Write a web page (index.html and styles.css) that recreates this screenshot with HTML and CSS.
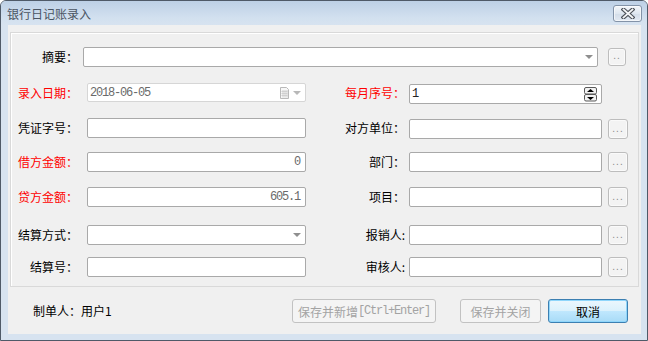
FILE: index.html
```html
<!DOCTYPE html>
<html lang="zh-CN">
<head>
<meta charset="utf-8">
<title>银行日记账录入</title>
<link rel="stylesheet" href="styles.css">
</head>
<body>
<div class="window">
  <div class="titlebar">
    <span class="title">银行日记账录入</span>
    <div class="close">
      <svg width="14" height="11" viewBox="0 0 14 11">
        <path d="M2.5 1.5 L11.5 9.5 M11.5 1.5 L2.5 9.5" stroke="#4b5058" stroke-width="4" stroke-linecap="square" fill="none"/>
        <path d="M2.5 1.5 L11.5 9.5 M11.5 1.5 L2.5 9.5" stroke="#f4f6f8" stroke-width="1.8" stroke-linecap="square" fill="none"/>
      </svg>
    </div>
  </div>
  <div class="client">
    <div class="panel">
      <div class="form">
        <label class="lbl">摘要：</label>
        <div class="field wide"><span class="arrow"></span></div>
        <div class="more first">..</div>

        <label class="lbl req">录入日期：</label>
        <div class="field fl date">
          <span class="val">2018-06-05</span>
          <svg class="cal" width="9" height="12" viewBox="0 0 9 12">
            <path d="M0.5 0.5 H6.5 L8.5 2.5 V11.5 H0.5 Z" fill="#f7f7f7" stroke="#b9b9b9"/>
            <path d="M1.5 4.5 H7.5 M1.5 6.5 H7.5 M1.5 8.5 H7.5 M3 3 V10.5 M5 3 V10.5 M7 3 V10.5" stroke="#d0d0d0" fill="none"/>
          </svg>
          <span class="arrow light"></span>
        </div>
        <label class="lbl lr req">每月序号：</label>
        <div class="field fr off">
          <span class="val">1</span>
          <svg class="spin" width="13" height="15" viewBox="0 0 13 15">
            <rect x="0.5" y="0.5" width="12" height="6.5" rx="1.5" fill="#f2f2f2" stroke="#5a5a5a"/>
            <rect x="0.5" y="7.5" width="12" height="6.5" rx="1.5" fill="#f2f2f2" stroke="#5a5a5a"/>
            <path d="M3 5 L6.5 2 L10 5 Z" fill="#000"/>
            <path d="M3 10 L6.5 13 L10 10 Z" fill="#000"/>
          </svg>
        </div>

        <label class="lbl">凭证字号：</label>
        <div class="field fl"></div>
        <label class="lbl lr">对方单位：</label>
        <div class="field fr off"></div>
        <div class="more off">...</div>

        <label class="lbl req">借方金额：</label>
        <div class="field fl num"><span class="val">0</span></div>
        <label class="lbl lr">部门：</label>
        <div class="field fr"></div>
        <div class="more">...</div>

        <label class="lbl req">贷方金额：</label>
        <div class="field fl num"><span class="val">605.1</span></div>
        <label class="lbl lr">项目：</label>
        <div class="field fr"></div>
        <div class="more">...</div>

        <label class="lbl">结算方式：</label>
        <div class="field fl"><span class="arrow"></span></div>
        <label class="lbl lr">报销人:</label>
        <div class="field fr"></div>
        <div class="more">...</div>

        <label class="lbl">结算号：</label>
        <div class="field fl"></div>
        <label class="lbl lr">审核人:</label>
        <div class="field fr"></div>
        <div class="more">...</div>
      </div>
    </div>
    <div class="footer">
      <span class="maker">制单人：用户1</span>
      <button class="btn dis b1">保存并新增<span class="mono">[Ctrl+Enter]</span></button>
      <button class="btn dis b2">保存并关闭</button>
      <button class="btn primary b3">取消</button>
    </div>
  </div>
</div>
</body>
</html>
```
FILE: styles.css
```css
* { box-sizing: border-box; }
html, body { margin: 0; padding: 0; }
body {
  width: 648px;
  height: 341px;
  background: #ffffff;
  font-family: "Noto Sans CJK SC", "Noto Sans", sans-serif;
  font-size: 12px;
  overflow: hidden;
}
.window {
  width: 648px;
  height: 341px;
  border: 1px solid #4f5a68;
  border-radius: 6px 6px 0 0;
  background: #d7e3f0;
  display: flex;
  flex-direction: column;
}
.titlebar {
  height: 24px;
  display: flex;
  align-items: center;
  padding: 0 5px 0 6px;
  background: linear-gradient(#bdd0e6, #d2e0ef 70%, #d7e3f0);
  border-radius: 5px 5px 0 0;
}
.title {
  color: #4a5462;
  font-size: 12px;
  line-height: 16px;
  margin-top: 1px;
}
.close {
  margin-left: auto;
  width: 29px;
  height: 17px;
  border: 1px solid #8393a8;
  border-radius: 3px;
  background: linear-gradient(#f3f6fa, #dfe7f0 50%, #d3dde9 51%, #e2e9f2);
  display: flex;
  align-items: center;
  justify-content: center;
  box-shadow: inset 0 0 0 1px rgba(255,255,255,0.6);
}
.client {
  flex: 1;
  margin: 0 6px 6px 7px;
  background: #f0f0f0;
  display: flex;
  flex-direction: column;
}
.panel {
  margin: 7px 2px 0 2px;
  height: 255px;
  border: 1px solid #d9d9d9;
  box-shadow: inset 1px 1px 0 #ffffff;
  background: #f0f0f0;
}
.form {
  display: grid;
  grid-template-columns: 72px 4px 219px 103px 193px 6px 20px;
  grid-template-rows: 36px 35px 34px 35px 38px 32px 20px;
  align-items: start;
  padding-top: 14px;
}
.lbl {
  grid-column: 1;
  text-align: right;
  padding-right: 5px;
  line-height: 20px;
  height: 20px;
  color: #000;
  white-space: nowrap;
}
.lbl.lr {
  grid-column: 4;
  padding-right: 4px;
}
.lbl.req { color: #ff0000; }
.field {
  height: 20px;
  border: 1px solid #a9a9a9;
  border-radius: 2px;
  background: #fff;
  display: flex;
  align-items: center;
  padding: 0 4px 0 2px;
}
.field.wide { grid-column: 2 / 6; margin-right: 4px; justify-content: flex-end; }
.field.fl { grid-column: 3; }
.field.fr { grid-column: 5; }
.field.off { margin-top: 1px; }
.field.date { border-color: #d6d6d6; height: 19px; }
.field.num { justify-content: flex-end; padding-right: 5px; }
.val {
  font-family: "Liberation Mono", monospace;
  font-size: 12px;
  letter-spacing: -1.2px;
  color: #6a6a6a;
  line-height: 16px;
}
.field.fr .val { color: #222; }
.date .val { margin-left: 0; }
.cal { margin-left: auto; }
.arrow {
  margin-left: auto;
  width: 0;
  height: 0;
  border-left: 4px solid transparent;
  border-right: 4px solid transparent;
  border-top: 4px solid #8f8f8f;
}
.arrow.light { margin-left: 4px; border-top-color: #b8b8b8; }
.field.wide .arrow { margin-right: 0; }
.spin { margin-left: auto; }
.more {
  grid-column: 7;
  height: 20px;
  border: 1px solid #bdbdbd;
  border-radius: 3px;
  background: #f3f3f3;
  box-shadow: inset 0 0 0 1px #fafafa;
  color: #8a8a8a;
  font-family: "Liberation Sans", sans-serif;
  font-size: 10px;
  line-height: 10px;
  display: flex;
  align-items: flex-end;
  justify-content: center;
  padding-bottom: 4px;
  letter-spacing: 1px;
}
.more.first { width: 18px; height: 18px; margin-top: 1px; }
.more.off { margin-top: 1px; }
.footer {
  flex: 1;
  display: flex;
  align-items: center;
  padding: 0 13px 0 25px;
}
.maker { color: #000; margin-right: auto; }
.btn {
  height: 24px;
  margin-top: 1px;
  border: 1px solid #c2c2c2;
  border-radius: 3px;
  background: #f4f4f4;
  color: #a3a3a3;
  font-family: "Noto Sans CJK SC", sans-serif;
  font-size: 12px;
  padding: 0;
  display: flex;
  align-items: center;
  justify-content: center;
}
.mono {
  font-family: "Liberation Mono", monospace;
  letter-spacing: -1.2px;
}
.b1 { width: 144px; }
.b2 { width: 81px; margin-left: 24px; }
.b3 { width: 80px; margin-left: 7px; }
.btn.primary {
  border-color: #3c7fb1;
  color: #000;
  background: linear-gradient(#ecf7fd, #dbf1fc 48%, #bfe7fd 52%, #a8dbf7);
  box-shadow: inset 0 0 0 1px #8fd6fb;
}
```
